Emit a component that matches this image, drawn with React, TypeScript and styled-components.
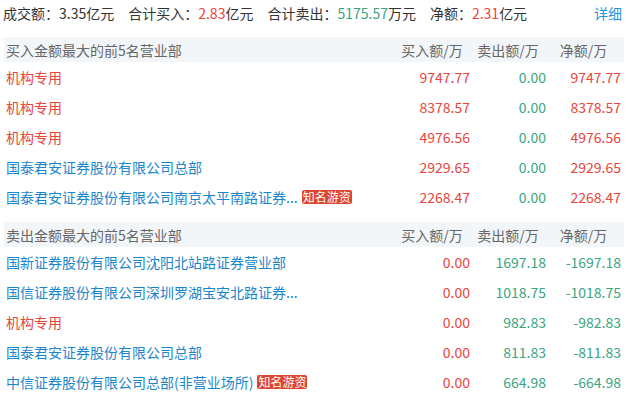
import styled, { createGlobalStyle } from "styled-components";

const GlobalStyle = createGlobalStyle`
    body {
        margin: 0;
        background: #ffffff;
        font-family: "Noto Sans CJK SC", "Noto Sans", sans-serif;
        font-size: 14px;
    }
`;

const RED = "#e8453c";
const GREEN = "#3ba57f";
const BLUE = "#1b86cc";

type Tone = "red" | "green" | "blue" | "plain";

const toneColor = (tone: Tone) =>
    tone === "red" ? RED : tone === "green" ? GREEN : tone === "blue" ? BLUE : "#333333";

// names longer than this get cut and end in "..."
const MAX_NAME = 20;

const clipName = (name: string) =>
    name.length > MAX_NAME + 2 ? `${name.slice(0, MAX_NAME)}...` : name;

const Page = styled.div`
    width: 620px;
    padding: 0 4px 0 4px;
    color: #333333;
`;

const Summary = styled.div`
    display: flex;
    align-items: center;
    height: 25px;
    padding: 0 2px 0 0;
    margin-left: -1px;
    margin-bottom: 12px;
`;

const SummaryItem = styled.span`
    margin-right: 14px;
    white-space: nowrap;
`;

const Value = styled.span<{ $tone: Tone }>`
    color: ${(props) => toneColor(props.$tone)};
`;

const DetailLink = styled.a`
    margin-left: auto;
    color: #1a96dc;
    text-decoration: none;
    cursor: pointer;
`;

const Section = styled.section<{ $gap?: number }>`
    margin-top: ${(props) => props.$gap ?? 0}px;
`;

const Grid = styled.div`
    display: grid;
    grid-template-columns: 1fr 76px 76px 75px;
    padding: 0 3px 0 2px;
    align-items: center;
`;

const HeadRow = styled(Grid)`
    height: 25px;
    background: #f3f6f9;
    color: #666666;
`;

const HeadCell = styled.div`
    text-align: center;
    white-space: nowrap;
`;

const HeadTitle = styled.div`
    white-space: nowrap;
`;

const Row = styled(Grid)`
    height: 30px;
`;

const NameCell = styled.div`
    display: flex;
    align-items: center;
    min-width: 0;
`;

const Name = styled.span<{ $tone: Tone }>`
    color: ${(props) => toneColor(props.$tone)};
    white-space: nowrap;
`;

const Badge = styled.span`
    flex: none;
    margin-left: 4px;
    padding: 0 1px;
    font-size: 12px;
    line-height: 14px;
    color: #ffffff;
    background: #dd4532;
    border-radius: 2px;
`;

const Num = styled.div<{ $tone: Tone }>`
    text-align: right;
    color: ${(props) => toneColor(props.$tone)};
    white-space: nowrap;
`;

interface Seat {
    name: string;
    badge?: boolean;
    buy: number;
    sell: number;
}

const buyers: Seat[] = [
    { name: "机构专用", buy: 9747.77, sell: 0 },
    { name: "机构专用", buy: 8378.57, sell: 0 },
    { name: "机构专用", buy: 4976.56, sell: 0 },
    { name: "国泰君安证券股份有限公司总部", buy: 2929.65, sell: 0 },
    { name: "国泰君安证券股份有限公司南京太平南路证券营业部", badge: true, buy: 2268.47, sell: 0 },
];

const sellers: Seat[] = [
    { name: "国新证券股份有限公司沈阳北站路证券营业部", buy: 0, sell: 1697.18 },
    { name: "国信证券股份有限公司深圳罗湖宝安北路证券营业部", buy: 0, sell: 1018.75 },
    { name: "机构专用", buy: 0, sell: 982.83 },
    { name: "国泰君安证券股份有限公司总部", buy: 0, sell: 811.83 },
    { name: "中信证券股份有限公司总部(非营业场所)", badge: true, buy: 0, sell: 664.98 },
];

const SeatRow = ({ seat }: { seat: Seat }) => {
    const net = seat.buy - seat.sell;
    const nameTone: Tone = seat.name === "机构专用" ? "red" : "blue";
    return (
        <Row>
            <NameCell>
                <Name $tone={nameTone} title={seat.name}>{clipName(seat.name)}</Name>
                {seat.badge && <Badge>知名游资</Badge>}
            </NameCell>
            <Num $tone="red">{seat.buy.toFixed(2)}</Num>
            <Num $tone="green">{seat.sell.toFixed(2)}</Num>
            <Num $tone={net >= 0 ? "red" : "green"}>{net.toFixed(2)}</Num>
        </Row>
    );
};

const SeatTable = ({ title, seats, gap }: { title: string; seats: Seat[]; gap?: number }) => (
    <Section $gap={gap}>
        <HeadRow>
            <HeadTitle>{title}</HeadTitle>
            <HeadCell>买入额/万</HeadCell>
            <HeadCell>卖出额/万</HeadCell>
            <HeadCell>净额/万</HeadCell>
        </HeadRow>
        {seats.map((seat, i) => (
            <SeatRow key={i} seat={seat} />
        ))}
    </Section>
);

const App = () => (
    <>
        <GlobalStyle />
        <Page>
            <Summary>
                <SummaryItem>成交额：<Value $tone="plain">3.35</Value>亿元</SummaryItem>
                <SummaryItem>合计买入：<Value $tone="red">2.83</Value>亿元</SummaryItem>
                <SummaryItem>合计卖出：<Value $tone="green">5175.57</Value>万元</SummaryItem>
                <SummaryItem>净额：<Value $tone="red">2.31</Value>亿元</SummaryItem>
                <DetailLink>详细</DetailLink>
            </Summary>
            <SeatTable title="买入金额最大的前5名营业部" seats={buyers} />
            <SeatTable title="卖出金额最大的前5名营业部" seats={sellers} gap={10} />
        </Page>
    </>
);

export default App;
